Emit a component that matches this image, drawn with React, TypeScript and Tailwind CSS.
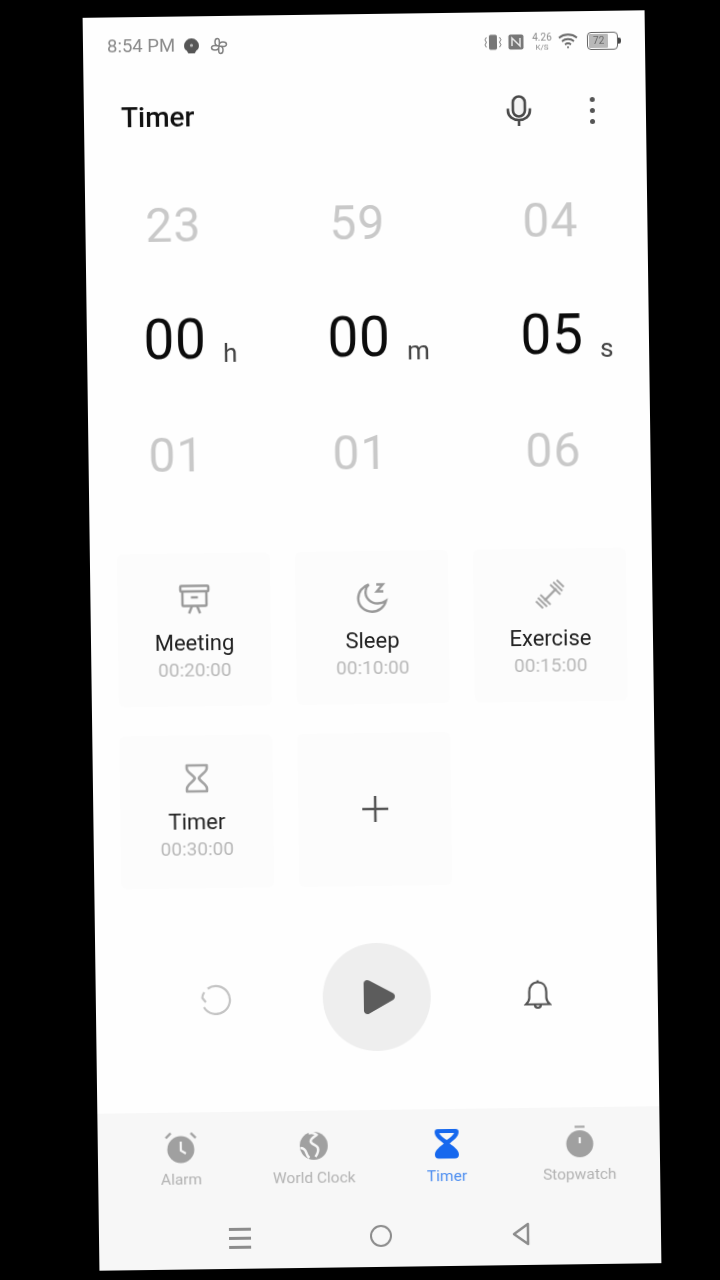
import type { ReactNode } from 'react';

const wheel = [
    { top: '23', mid: '00', unit: 'h', bottom: '01' },
    { top: '59', mid: '00', unit: 'm', bottom: '01' },
    { top: '04', mid: '05', unit: 's', bottom: '06' },
];

function MeetingIcon() {
    return (
        <svg width="32" height="32" viewBox="0 0 32 32" fill="none" stroke="#999" strokeWidth="2.400">
            <rect x="2" y="2.500" width="28" height="5.500" rx="1" />
            <path d="M4 8v13.500a1 1 0 0 0 1 1h22a1 1 0 0 0 1-1V8" />
            <path d="M12.500 14h7" />
            <path d="M13.500 22.500 10.500 30M18.500 22.500l3 7.500" />
        </svg>
    );
}

function SleepIcon() {
    return (
        <svg width="32" height="32" viewBox="0 0 32 32" fill="none" stroke="#999" strokeWidth="2.400">
            <path d="M12.500 3.500C6 5.500 1.800 11 1.800 17.500c0 7.600 6.200 13.200 13.700 13.200 6.600 0 12.300-4.300 14-10.700-2.500 1.700-5.200 2.500-8.200 2.500-8 0-13-6.500-12-13 .3-2.300 1.400-4.500 3.200-6Z" />
            <path d="M20 3.500h6.500l-6 7h6.500" />
        </svg>
    );
}

function DumbbellIcon() {
    return (
        <svg width="32" height="32" viewBox="0 0 32 32" fill="none" stroke="#a3a3a3" strokeWidth="1.800">
            <path d="M10 22 22 10" strokeWidth="2.400" />
            <path d="M6 16l10 10M3.500 19l9 9M1.500 22.500l7 7M16 6l10 10M19 3.500l9 9M22.500 1.500l7 7" />
        </svg>
    );
}

function HourglassIcon() {
    return (
        <svg width="26" height="32" viewBox="0 0 26 32" fill="none" stroke="#a3a3a3" strokeWidth="2.600" strokeLinejoin="round">
            <path d="M3 3h20v3c0 4-7 7-8 10 1 3 8 6 8 10v3H3v-3c0-4 7-7 8-10-1-3-8-6-8-10Z" />
        </svg>
    );
}

function AlarmFilled() {
    return (
        <svg width="36" height="36" viewBox="0 0 36 36">
            <circle cx="18" cy="20" r="13.500" fill="#a0a0a0" />
            <path d="M3 8.500 8 3.500M33 8.500 28 3.500" stroke="#a0a0a0" strokeWidth="2.400" fill="none" />
            <path d="M18 12v9l5 3" stroke="#f7f7f7" strokeWidth="2.200" fill="none" />
        </svg>
    );
}

function GlobeFilled() {
    return (
        <svg width="36" height="36" viewBox="0 0 36 36">
            <circle cx="18" cy="18" r="14" fill="#a0a0a0" />
            <path d="M13 5.500c3-1 6 0 8 1.500-1 1.500-6 3-6 6.500 0 3 6 3.500 7 6.500s-1 7-2.500 9M4.500 20c2.500 0 5 2 6 5 .5 1.700 1 3.500 3 5" stroke="#f7f7f7" strokeWidth="2.500" fill="none" />
        </svg>
    );
}

function HourglassFilled() {
    return (
        <svg width="36" height="36" viewBox="0 0 36 36" fill="#1668ee">
            <path d="M6 6a3 3 0 0 1 3-3h18a3 3 0 0 1 3 3c0 4.800-5.500 8.500-9 11.500 3.500 3 9 6.500 9 11a4 4 0 0 1-4 4H10a4 4 0 0 1-4-4c0-4.500 5.500-8 9-11C11.500 14.500 6 10.800 6 6Z" />
            <path d="M10.500 7h15c-1 2.500-4.700 5-7.500 7-2.800-2-6.500-4.500-7.500-7Z" fill="#f7f7f7" />
        </svg>
    );
}

function StopwatchFilled() {
    return (
        <svg width="36" height="36" viewBox="0 0 36 36">
            <path d="M13 2.500h10" stroke="#a8a8a8" strokeWidth="2.200" />
            <circle cx="18" cy="19.500" r="13.500" fill="#a0a0a0" />
            <path d="M18 13v6" stroke="#f7f7f7" strokeWidth="2.200" />
        </svg>
    );
}

function Card({ icon, label, time, pad }: { icon: ReactNode; label: string; time: string; pad: string }) {
    return (
        <div className={`flex h-[153px] flex-col items-center rounded-md bg-[#fcfcfc] ${pad}`}>
            <div className="flex h-[32px] items-center">{icon}</div>
            <div className="mt-[14px] text-[22px] leading-[28px] text-[#222]">{label}</div>
            <div className="text-[19px] leading-[26px] text-[#b8b8b8]">{time}</div>
        </div>
    );
}

function Tab({ icon, label, active }: { icon: ReactNode; label: string; active?: boolean }) {
    return (
        <div className="flex flex-col items-center">
            {icon}
            <div className={`mt-[4px] text-[15.500px] leading-[20px] ${active ? 'text-[#4a8cf0]' : 'text-[#b2b2b2]'}`}>
                {label}
            </div>
        </div>
    );
}

export default function App() {
    return (
        <div className="flex h-[1280px] w-[720px] items-center overflow-hidden bg-black pl-[91px] font-['Roboto',sans-serif]">
            <div className="flex h-[1253px] w-[562px] rotate-[-0.77deg] flex-col bg-[#fefefe] blur-[0.6px]">
                {/* status bar */}
                <div className="flex h-[59px] items-center justify-between pl-[24px] pr-[24px]">
                    <div className="flex items-center gap-[8px]">
                        <span className="text-[18.500px] text-[#8a8a8a]">8:54 PM</span>
                        <svg width="17" height="17" viewBox="0 0 16 16">
                            <path d="M8 1a7 7 0 0 1 7 7c0 2.500-1 3.500-2.500 4.500L11 15H5l-1.500-2.500C2 11.500 1 10.500 1 8a7 7 0 0 1 7-7Z" fill="#555" />
                            <circle cx="8" cy="7.500" r="1.500" fill="#bbb" />
                        </svg>
                        <svg className="ml-[2px]" width="18" height="18" viewBox="0 0 18 18" fill="none" stroke="#808080" strokeWidth="1.500">
                            <path d="M9 9C6 9 5 7 5 5s1-3.500 2.500-3.500S10 3 9 9Zm0 0c0-3 2-4 4-4s3.500 1 3.500 2.500S15 10 9 9Zm0 0c3 0 4 2 4 4s-1 3.500-2.500 3.500S8 15 9 9Zm0 0c0 3-2 4-4 4s-3.500-1-3.500-2.500S3 8 9 9Z" />
                        </svg>
                    </div>
                    <div className="flex items-center">
                        <svg width="20" height="18" viewBox="0 0 20 18" fill="none" stroke="#777" strokeWidth="1">
                            <rect x="6.500" y="2" width="7" height="14" rx="1" fill="#777" />
                            <path d="M3.500 4 2 6.500l1.500 2.500L2 11.500 3.500 14M16.500 4 18 6.500 16.500 9l1.500 2.500-1.500 2.500" />
                        </svg>
                        <svg className="ml-[5px]" width="16" height="16" viewBox="0 0 16 16">
                            <rect x="0.500" y="0.500" width="15" height="15" rx="2" fill="#777" />
                            <path d="M4 12V4l8 8V4" stroke="#e8e8e8" strokeWidth="1.500" fill="none" />
                        </svg>
                        <div className="ml-[6px] flex w-[24px] flex-col items-center text-[#8a8a8a]">
                            <span className="text-[10px] leading-[11px]">4.26</span>
                            <span className="text-[8px] leading-[9px]">K/S</span>
                        </div>
                        <svg className="ml-[4px]" width="20" height="17" viewBox="0 0 20 17" fill="none" stroke="#666" strokeWidth="1.800">
                            <path d="M1 5.500C6 1.200 14 1.200 19 5.500M4 9c3.500-3 8.500-3 12 0M7 12.200c1.800-1.400 4.200-1.400 6 0" />
                            <circle cx="10" cy="15" r="1" fill="#666" stroke="none" />
                        </svg>
                        <div className="ml-[9px] flex items-center">
                            <div className="flex h-[18px] w-[31px] rounded-[4px] border-[1.500px] border-[#666] p-[1px]">
                                <div className="flex w-[72%] items-center justify-center rounded-[1px] bg-[#b8b8b8] text-[10px] leading-none text-[#666]">
                                    72
                                </div>
                            </div>
                            <div className="h-[6px] w-[3px] rounded-r-[2px] bg-[#444]" />
                        </div>
                    </div>
                </div>

                {/* header */}
                <div className="flex h-[80px] items-center justify-between pl-[37px] pr-[50px]">
                    <h1 className="pt-[4px] text-[28px] font-medium text-[#111]">Timer</h1>
                    <div className="flex items-center gap-[58px]">
                        <svg width="26" height="32" viewBox="0 0 26 32" fill="none" stroke="#4a4a4a" strokeWidth="2.600">
                            <rect x="7" y="1.500" width="12" height="20" rx="6" fill="#f4f4f4" />
                            <path d="M2 13.500v2c0 6 5 9.500 11 9.500s11-3.500 11-9.500v-2M13 25v6" />
                        </svg>
                        <div className="flex w-[6px] flex-col gap-[6px]">
                            <div className="h-[5px] w-[5px] rounded-full bg-[#555]" />
                            <div className="h-[5px] w-[5px] rounded-full bg-[#555]" />
                            <div className="h-[5px] w-[5px] rounded-full bg-[#555]" />
                        </div>
                    </div>
                </div>

                {/* hour, minute, second wheels */}
                <div className="mt-[11px] grid grid-cols-[184px_193px_1fr] pl-[56px]">
                    {wheel.map((col) => (
                        <div key={col.unit} className="flex flex-col">
                            <div className="flex h-[115.500px] w-[64px] items-center justify-center pt-[2px] text-[48px] tracking-[1px] text-[#c9c9c9]">
                                {col.top}
                            </div>
                            <div className="flex h-[115.500px] items-center">
                                <div className="flex w-[64px] justify-center pb-[1px] text-[55px] tracking-[0.5px] text-[#0c0c0c]">{col.mid}</div>
                                <div className="ml-[16px] pt-[28px] text-[26px] leading-[32px] text-[#444]">{col.unit}</div>
                            </div>
                            <div className="flex h-[115.500px] w-[64px] items-center justify-center text-[48px] tracking-[1px] text-[#c9c9c9]">
                                {col.bottom}
                            </div>
                        </div>
                    ))}
                </div>

                {/* presets */}
                <div className="mt-[40px] grid grid-cols-[repeat(3,153px)] gap-x-[25px] gap-y-[29px] px-[27px]">
                    <Card icon={<MeetingIcon />} label="Meeting" time="00:20:00" pad="pt-[30px]" />
                    <Card icon={<SleepIcon />} label="Sleep" time="00:10:00" pad="pt-[30px]" />
                    <Card icon={<DumbbellIcon />} label="Exercise" time="00:15:00" pad="pt-[30px]" />
                    <Card icon={<HourglassIcon />} label="Timer" time="00:30:00" pad="pt-[27px]" />
                    <div className="flex h-[153px] items-center justify-center rounded-md bg-[#fcfcfc]">
                        <svg width="28" height="28" viewBox="0 0 28 28" stroke="#555" strokeWidth="2.500">
                            <path d="M14 1v26M1 14h26" />
                        </svg>
                    </div>
                </div>

                {/* controls */}
                <div className="mt-[57px] flex items-center justify-center gap-[53px]">
                    <div className="flex w-[108px] justify-center">
                        <svg width="32" height="32" viewBox="0 0 32 32" fill="none" stroke="#c4c4c4" strokeWidth="2.200">
                            <path d="M8 5.500A14 14 0 1 1 4 24" />
                            <path d="M2.500 14a14 14 0 0 1 2-5M2 14l4 5" />
                        </svg>
                    </div>
                    <div className="flex h-[108px] w-[108px] items-center justify-center rounded-full bg-[#eeeeee] pl-[4px]">
                        <svg width="34" height="38" viewBox="0 0 34 38">
                            <path d="M2 5.500c0-3 3-4.500 5.500-3l24 13c2.200 1.600 2.200 5 0 6.500l-24 13.500C5 37 2 35.500 2 32.500Z" fill="#5c5c5c" />
                        </svg>
                    </div>
                    <div className="flex w-[108px] justify-center">
                        <svg width="28" height="32" viewBox="0 0 28 32" fill="none" stroke="#555" strokeWidth="2.200">
                            <path d="M14 3.500c-5.500 0-8.500 4-8.500 9.500v6c0 3-1.500 4.500-3.500 6.500h24c-2-2-3.500-3.500-3.500-6.500v-6c0-5.500-3-9.500-8.500-9.500Z" />
                            <path d="M14 1.500v2M11 25.500c0 2 1.200 3.500 3 3.500s3-1.500 3-3.500" />
                        </svg>
                    </div>
                </div>

                {/* tabs and nav keys */}
                <div className="mt-auto flex h-[157px] flex-col bg-[#f7f7f7] pt-[17px]">
                    <div className="grid grid-cols-4 pl-[17px] pr-[14px]">
                        <Tab icon={<AlarmFilled />} label="Alarm" />
                        <Tab icon={<GlobeFilled />} label="World Clock" />
                        <Tab icon={<HourglassFilled />} label="Timer" active />
                        <Tab icon={<StopwatchFilled />} label="Stopwatch" />
                    </div>
                    <div className="mt-[37px] flex items-center justify-center gap-[119px]">
                        <div className="flex w-[22px] flex-col gap-[6px]">
                            <div className="h-[3px] bg-[#8c8c8c]" />
                            <div className="h-[3px] bg-[#8c8c8c]" />
                            <div className="h-[3px] bg-[#8c8c8c]" />
                        </div>
                        <div className="h-[22px] w-[22px] rounded-full border-[2.500px] border-[#8c8c8c]" />
                        <svg width="20" height="24" viewBox="0 0 20 24" fill="none" stroke="#8c8c8c" strokeWidth="2.500" strokeLinejoin="round">
                            <path d="M17 2 3 12l14 10Z" />
                        </svg>
                    </div>
                </div>
            </div>
        </div>
    );
}
